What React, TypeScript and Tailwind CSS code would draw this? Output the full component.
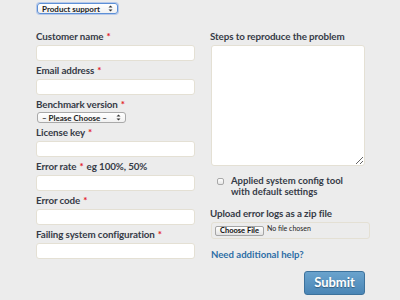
import React from "react";

const font = { fontFamily: "Lato, 'Open Sans', Arial, sans-serif" };

const Req = () => <span className="text-[#e3161f] ml-[3px]">*</span>;

const Label = ({ children }: { children: React.ReactNode }) => (
  <label className="block h-[14px] leading-[14px] text-[9.8px] tracking-[-0.1px] font-bold text-[#363b47] mb-[2px] whitespace-nowrap">
    {children}
  </label>
);

const TextInput = () => (
  <input
    type="text"
    className="block w-[159px] h-[16px] bg-white border border-[#e4e0d4] rounded-[3px] outline-none"
  />
);

const Arrows = () => (
  <svg width="5" height="7" viewBox="0 0 5 7" className="shrink-0">
    <path d="M0.5 2.5 L2.5 0.5 L4.5 2.5 Z" fill="#333" />
    <path d="M0.5 4.5 L2.5 6.5 L4.5 4.5 Z" fill="#333" />
  </svg>
);

const FakeSelect = ({
  label,
  width,
  focused,
}: {
  label: string;
  width: string;
  focused?: boolean;
}) => (
  <div
    className={`flex items-center justify-between h-[11px] px-[4px] rounded-[3px] bg-gradient-to-b from-white to-[#f1f1f1] text-[8px] leading-[10px] font-bold text-[#1d1d1d] ${width} ${
      focused
        ? "border border-[#5c8fd6] shadow-[0_0_0_1px_rgba(120,160,230,0.45)]"
        : "border border-[#a9a9a9]"
    }`}
  >
    <span>{label}</span>
    <Arrows />
  </div>
);

export default function App() {
  return (
    <div className="w-[400px] h-[300px] bg-[#ececec] overflow-hidden" style={font}>
      <div className="pl-[37px] pt-[3px]">
        <FakeSelect label="Product support" width="w-[81px]" focused />
      </div>

      <div className="flex pl-[36px] pt-[15px]">
        {/* left column */}
        <div className="w-[159px] flex flex-col">
          <Label>
            Customer name
            <Req />
          </Label>
          <TextInput />
          <div className="h-[2px]" />
          <Label>
            Email address
            <Req />
          </Label>
          <TextInput />
          <div className="h-[2px]" />
          <Label>
            Benchmark version
            <Req />
          </Label>
          <div className="pl-[1px] -mt-[1px]">
            <FakeSelect label="– Please Choose –" width="w-[89px]" />
          </div>
          <div className="h-[2px]" />
          <Label>
            License key
            <Req />
          </Label>
          <TextInput />
          <div className="h-[2px]" />
          <Label>
            Error rate
            <Req />
            <span className="ml-[3px]">eg 100%, 50%</span>
          </Label>
          <TextInput />
          <div className="h-[2px]" />
          <Label>
            Error code
            <Req />
          </Label>
          <TextInput />
          <div className="h-[2px]" />
          <Label>
            Failing system configuration
            <Req />
          </Label>
          <TextInput />
        </div>

        {/* right column */}
        <div className="ml-[15px] w-[162px] flex flex-col">
          <Label>Steps to reproduce the problem</Label>
          <textarea className="block w-[154px] h-[121px] ml-[1px] bg-white border border-[#e4e0d4] rounded-[3px] outline-none resize" />

          <div className="flex mt-[9px] ml-[7px]">
            <span className="mt-[3px] w-[7px] h-[7px] rounded-[2px] border border-[#a8a8a8] bg-gradient-to-b from-white to-[#e6e6e6] shrink-0" />
            <span className="ml-[7px] text-[9.5px] leading-[11px] font-bold text-[#363b47]">
              Applied system config tool
              <br />
              with default settings
            </span>
          </div>

          <div className="mt-[9px]">
            <Label>Upload error logs as a zip file</Label>
          </div>
          <div className="flex items-start w-[159px] h-[17px] ml-[1px] border border-[#e4e0d4] rounded-[3px] px-[3px] pt-[3px]">
            <button className="h-[10px] px-[4px] rounded-[2px] border border-[#a5a5a5] bg-gradient-to-b from-white to-[#e2e2e2] text-[7.5px] leading-[8px] font-bold text-[#111]">
              Choose File
            </button>
            <span className="ml-[3px] -mt-[2px] text-[7px] leading-[8px] text-[#222]">No file chosen</span>
          </div>

          <a className="block mt-[9px] ml-[1px] h-[14px] text-[9.6px] leading-[14px] font-bold text-[#2e6ea6]">
            Need additional help?
          </a>

          <div className="flex justify-end mt-[9px] pr-[7px]">
            <button className="w-[61px] h-[24px] rounded-[3px] border border-[#3d729c] bg-gradient-to-b from-[#6aa3cd] to-[#4a86b6] text-white text-[13px] font-bold [text-shadow:0_1px_1px_rgba(0,0,0,0.35)]">
              Submit
            </button>
          </div>
        </div>
      </div>
    </div>
  );
}
